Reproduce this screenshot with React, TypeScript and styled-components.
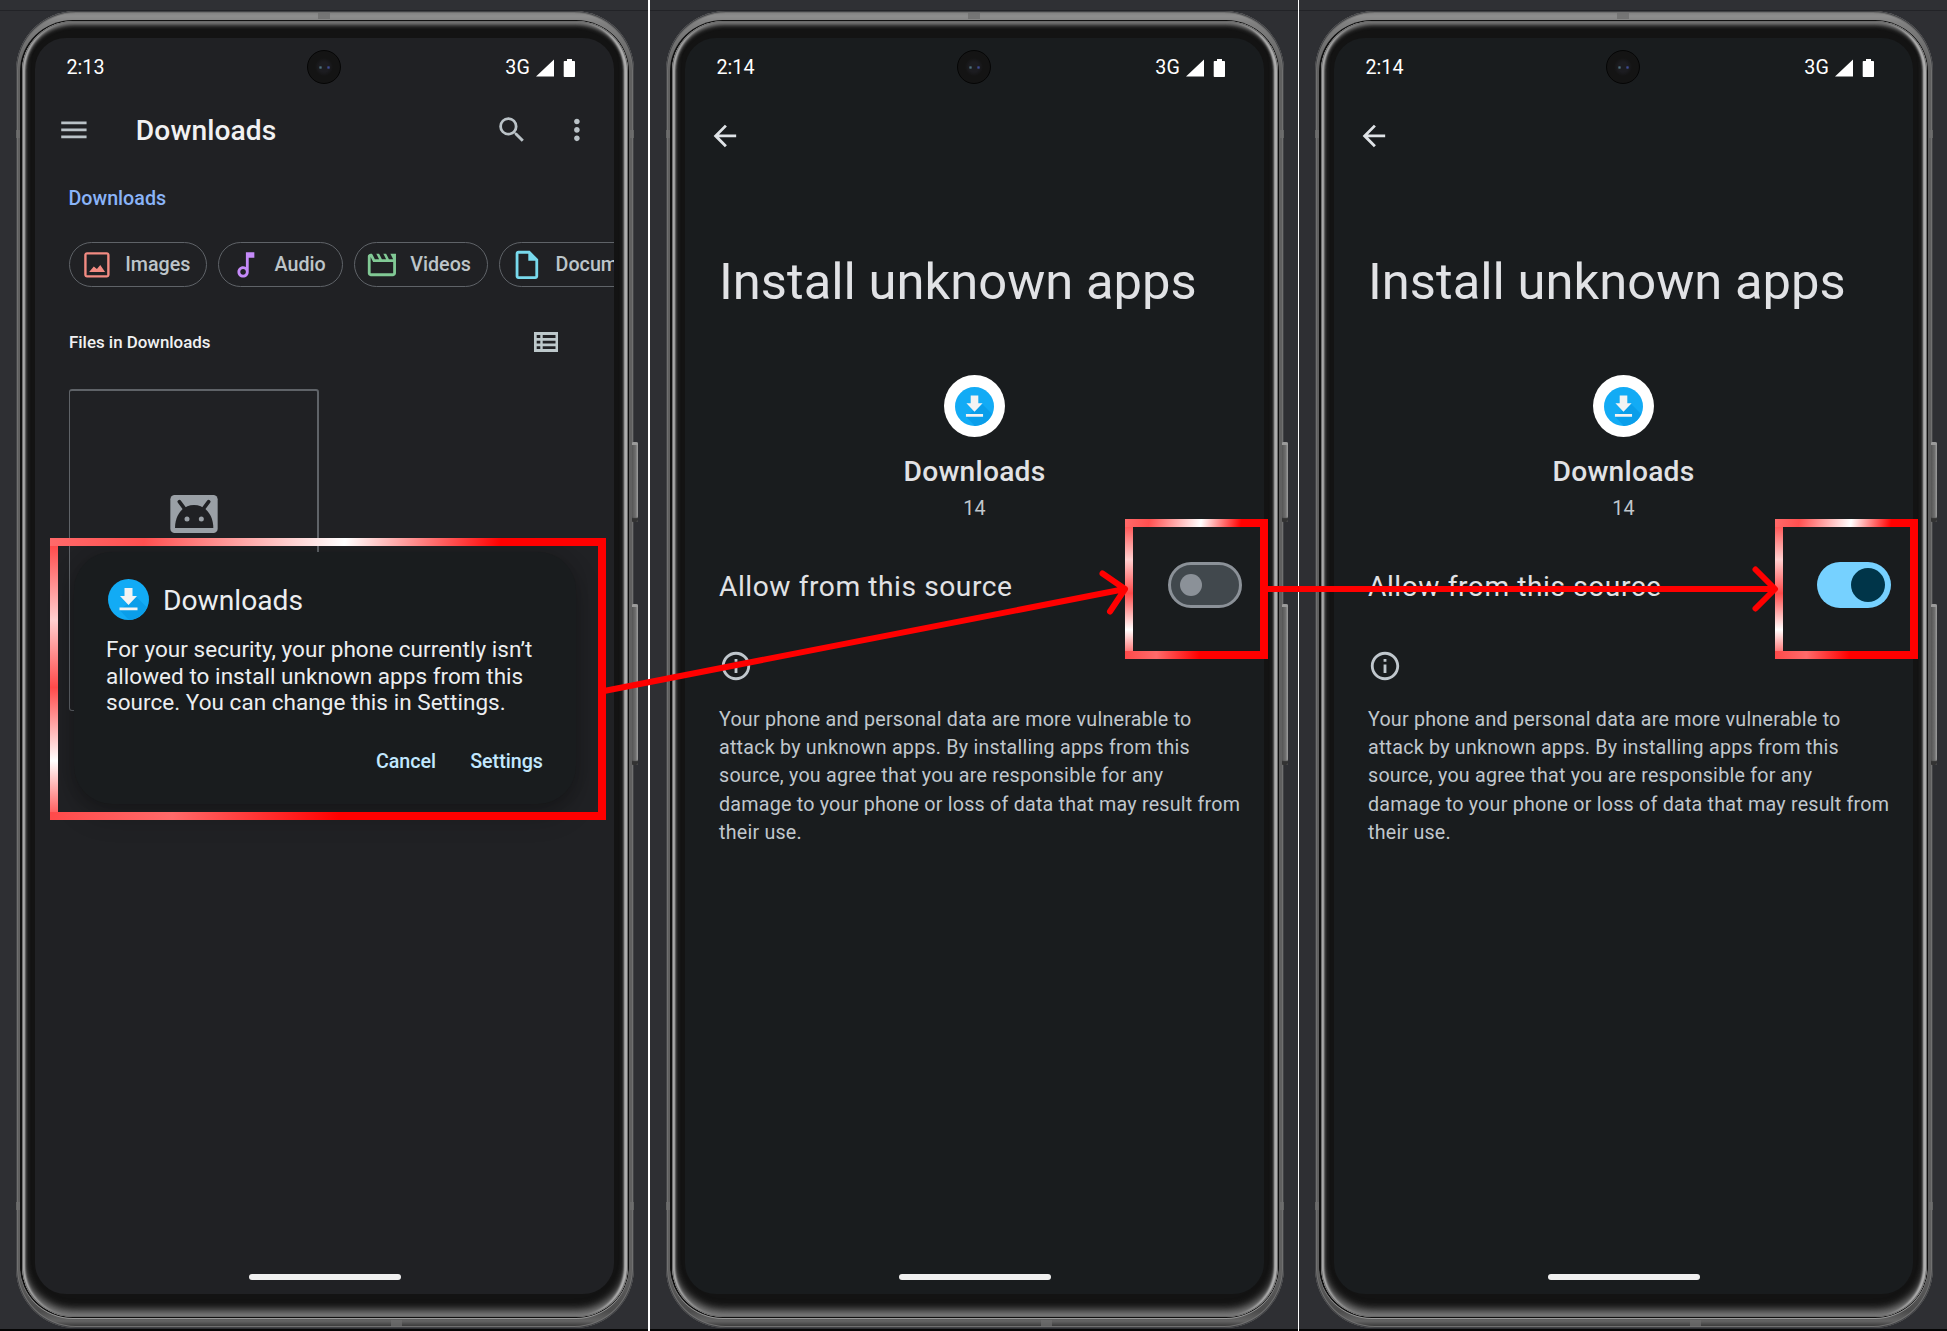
import React from "react";
import styled, { createGlobalStyle } from "styled-components";

const Global = createGlobalStyle`
  * { box-sizing: border-box; }
  html, body { margin: 0; padding: 0; background: #000; }
  body { font-family: Roboto, "Liberation Sans", sans-serif; overflow: hidden; }
  svg { display: block; flex: none; }
`;

const Stage = styled.main`
  position: relative;
  display: grid;
  grid-template-columns: 650px 649px 648px;
  width: 1947px;
  height: 1331px;
`;

const Panel = styled.section<{ $divider?: number }>`
  background: #fff;
  padding-right: ${(p) => p.$divider ?? 0}px;
`;

const Backdrop = styled.div`
  height: 1331px;
  padding: 11px 14px 3px 16px;
  background: linear-gradient(#2f3034 0 10px, #222327 10px 11px, #2e2f33 11px 1329px, #050505 1329px);
`;

const Body = styled.div`
  position: relative;
  height: 1317px;
  padding: 9px 5px 10px 4px;
  border-radius: 60px / 60px;
  background: linear-gradient(#7c7c7c 0, #8e8e8e 5px, #808080 12px, #606060 60px, #606060 1260px, #4c4c4c 1300px, #646464 1310px, #2c2c2c 1317px);
  box-shadow: inset 0 0 0 1px #424346, inset 0 0 0 2px #707070;
`;

const Rim = styled.div`
  height: 100%;
  padding: 1px 1px 1px 2px;
  border-radius: 53px / 51px;
  background: #101010;
  box-shadow: 0 1px 0 #999;
`;

const Bezel = styled.div`
  height: 100%;
  padding: 17px 14px 23px 13px;
  border-radius: 52px / 50px;
  background: #131313;
  box-shadow: inset 0 0 1px 1px #666, inset 4px 0 2px -1px #b4b4b4, inset -5px 0 2px -1px #b4b4b4,
    inset 0 4px 4px #777, inset 0 -5px 8px #858585, inset 0 -8px 8px #3c3c3c, inset 2px 0 4px #777, inset -2px 0 4px #777;
`;

const Screen = styled.div<{ $bg: string }>`
  position: relative;
  display: flex;
  flex-direction: column;
  height: 1256px;
  width: 579px;
  border-radius: 31px;
  overflow: hidden;
  background: ${(p) => p.$bg};
`;

const SideKey = styled.i<{ $top: number; $height: number }>`
  position: absolute;
  left: 616px;
  top: ${(p) => p.$top}px;
  width: 6px;
  height: ${(p) => p.$height}px;
  border-radius: 1px 2px 2px 1px;
  background: linear-gradient(90deg, #555, #6f6f6f 60%, #a0a0a0);
  box-shadow: inset 0 5px 0 -2px #9a9a9a, inset 0 -5px 1px -1px #333;
`;

const Seam = styled.i<{ $x: number; $y: number; $w: number; $h: number }>`
  position: absolute;
  left: ${(p) => p.$x}px;
  top: ${(p) => p.$y}px;
  width: ${(p) => p.$w}px;
  height: ${(p) => p.$h}px;
  background: rgba(110, 110, 110, 0.75);
`;

const Camera = styled.i`
  position: absolute;
  left: 272px;
  top: 12px;
  width: 34px;
  height: 34px;
  border-radius: 50%;
  border: 1px solid #050505;
  background:
    radial-gradient(circle at 12.5px 16.5px, #4d6f7c 0 0.5px, transparent 2px),
    radial-gradient(circle at 20.5px 16.5px, #3d4a94 0 0.5px, transparent 2px),
    radial-gradient(circle at 50% 50%, #1c1c20 0 5px, #141414 9px);
`;

const StatusBar = styled.header`
  display: flex;
  align-items: center;
  height: 58px;
  padding: 1px 38px 0 31.5px;
  font-size: 19.7px;
  color: #fff;
`;
const Clock = styled.span`
  flex: 1;
`;
const Network = styled.span`
  margin-right: 6px;
  letter-spacing: 0.2px;
`;

const HomeBar = styled.i`
  width: 152px;
  height: 6px;
  margin: auto auto 14px 213.5px;
  border-radius: 3px;
  background: #f0f0f0;
`;

const Toolbar = styled.div`
  display: flex;
  align-items: center;
  height: 68px;
  padding: 0 20px 0 22px;
  color: #bac2c7;
`;
const ToolbarTitle = styled.h1`
  flex: 1;
  margin: 1px 0 0 45px;
  font-size: 28.2px;
  font-weight: 500;
  letter-spacing: 0.1px;
  color: #f1f1f2;
`;
const ToolButton = styled.span`
  margin-left: 31px;
`;
const Breadcrumb = styled.div`
  height: 68px;
  line-height: 70px;
  padding-left: 33.5px;
  font-size: 19.7px;
  font-weight: 500;
  color: #8ab4f8;
`;

const Chips = styled.div`
  display: flex;
  gap: 11.3px;
  margin: 10px 0 0 34px;
`;
const Chip = styled.div<{ $w: number }>`
  display: flex;
  flex: none;
  align-items: center;
  gap: 11.4px;
  width: ${(p) => p.$w}px;
  height: 45px;
  padding-left: 10px;
  border: 1.4px solid #5f6368;
  border-radius: 23px;
  line-height: 24px;
  font-size: 19.7px;
  font-weight: 500;
  color: #bdc5c9;
`;
const ChipLabel = styled.span`
  padding-top: 1px;
`;

const SectionHead = styled.div`
  display: flex;
  align-items: center;
  justify-content: space-between;
  height: 93px;
  margin: 8px 0 1px;
  padding: 0 56px 0 34px;
  font-size: 16.9px;
  font-weight: 500;
  color: #f1f1f2;
`;
const FileCard = styled.div`
  width: 250px;
  height: 322px;
  margin-left: 34px;
  padding: 104px 0 0 100px;
  border: solid #5f6368;
  border-width: 2px 2px 1px 1px;
  border-radius: 3px;
`;

const Dialog = styled.div`
  position: absolute;
  left: 39px;
  top: 514px;
  width: 502px;
  height: 252px;
  padding: 27px 33px 0 32px;
  border-radius: 38px;
  background: #191c1e;
  box-shadow: 0 12px 26px rgba(0, 0, 0, 0.25), 0 0 14px rgba(0, 0, 0, 0.14);
`;
const DialogHead = styled.div`
  display: flex;
  align-items: center;
  gap: 14px;
  height: 41px;
  margin-left: 2px;
  line-height: 41px;
  font-size: 28.2px;
  color: #eceef0;
`;
const DialogTitle = styled.span`
  padding-top: 2px;
`;
const DialogText = styled.p`
  margin: 16px 0 0;
  font-size: 22.5px;
  line-height: 26.6px;
  letter-spacing: 0.04px;
  white-space: pre;
  color: #eceef0;
`;
const DialogActions = styled.div`
  display: flex;
  justify-content: flex-end;
  gap: 34px;
  margin-top: 31px;
  line-height: 30px;
  font-size: 19.7px;
  font-weight: 500;
  color: #c2e8ff;
`;

const BackRow = styled.div`
  display: flex;
  align-items: center;
  height: 78px;
  padding: 1px 0 0 22.5px;
  color: #dfe3e7;
`;
const PageTitle = styled.h1`
  margin: 77px 0 62px 34px;
  line-height: 62px;
  font-size: 50.7px;
  font-weight: 400;
  letter-spacing: 0.03px;
  color: #e1e2e5;
  white-space: nowrap;
`;
const AppSummary = styled.div`
  display: flex;
  flex-direction: column;
  align-items: center;
`;
const AppBadge = styled.div`
  display: grid;
  place-items: center;
  width: 61px;
  height: 62px;
  border-radius: 50%;
  background: #fff;
`;
const AppName = styled.div`
  margin-top: 18px;
  line-height: 34px;
  font-size: 28.2px;
  font-weight: 500;
  letter-spacing: 0.25px;
  color: #e1e2e5;
`;
const AppVersion = styled.div`
  margin-top: 8px;
  line-height: 24px;
  font-size: 19.7px;
  letter-spacing: 0.3px;
  color: #c0c7cd;
`;
const SettingRow = styled.div`
  display: flex;
  align-items: center;
  justify-content: space-between;
  height: 60px;
  margin-top: 34px;
  padding: 0 22.5px 0 34px;
  font-size: 28.2px;
  letter-spacing: 0.55px;
  color: #e1e2e5;
`;
const SettingLabel = styled.span`
  padding-top: 2px;
`;
const Track = styled.span<{ $on: boolean }>`
  display: flex;
  align-items: center;
  justify-content: ${(p) => (p.$on ? "flex-end" : "flex-start")};
  width: 74px;
  height: 46px;
  padding: 0 ${(p) => (p.$on ? 6 : 9)}px;
  border: ${(p) => (p.$on ? "0" : "3px solid #8b9198")};
  border-radius: 23px;
  background: ${(p) => (p.$on ? "#76d1ff" : "#41484d")};
`;
const Thumb = styled.i<{ $on: boolean }>`
  width: ${(p) => (p.$on ? 34 : 22)}px;
  height: ${(p) => (p.$on ? 34 : 22)}px;
  border-radius: 50%;
  background: ${(p) => (p.$on ? "#003549" : "#8b9198")};
`;
const InfoIconRow = styled.div`
  margin: 34px 0 0 33.5px;
  color: #c0c7cd;
`;
const InfoText = styled.p`
  margin: 23px 0 0 34px;
  font-size: 19.7px;
  line-height: 28.2px;
  letter-spacing: 0.22px;
  white-space: pre;
  color: #c0c7cd;
`;

const Highlight = styled.div<{ $x: number; $y: number; $w: number; $h: number }>`
  position: absolute;
  left: ${(p) => p.$x}px;
  top: ${(p) => p.$y}px;
  width: ${(p) => p.$w}px;
  height: ${(p) => p.$h}px;
  background:
    linear-gradient(100deg, #ff6a6a 0, #ff5050 17%, #fff 53%, #f00 81%) top / 100% 8px no-repeat,
    linear-gradient(#f00, #f00) right / 8px 100% no-repeat,
    linear-gradient(90deg, #ff4a4a 0, #ff6a6a 22%, #f00 52%) bottom / 100% 8px no-repeat,
    linear-gradient(#ff4c4c 3%, #ffd0d0 29%, #ff4a4a 53%, #fff 79%, #ff4a4a 100%) left / 8px 100% no-repeat;
`;
const Arrows = styled.svg`
  position: absolute;
  left: 0;
  top: 0;
  pointer-events: none;
`;

const ICON = 33.8;
const Glyph = ({ d, color = "currentColor", size = ICON }: { d: string; color?: string; size?: number }) => (
  <svg width={size} height={size} viewBox="0 0 24 24" fill={color}>
    <path fillRule="evenodd" d={d} />
  </svg>
);

const paths = {
  menu: "M3 18h18v-2H3v2zm0-5h18v-2H3v2zm0-7v2h18V6H3z",
  search:
    "M15.5 14h-.79l-.28-.27A6.471 6.471 0 0 0 16 9.5 6.5 6.5 0 1 0 9.5 16c1.61 0 3.09-.59 4.23-1.57l.27.28v.79l5 4.99L20.49 19l-4.99-5zm-6 0C7.01 14 5 11.99 5 9.5S7.01 5 9.5 5 14 7.01 14 9.5 11.99 14 9.5 14z",
  more: "M12 8c1.1 0 2-.9 2-2s-.9-2-2-2-2 .9-2 2 .9 2 2 2zm0 2c-1.1 0-2 .9-2 2s.9 2 2 2 2-.9 2-2-.9-2-2-2zm0 6c-1.1 0-2 .9-2 2s.9 2 2 2 2-.9 2-2-.9-2-2-2z",
  image:
    "M19 3H5c-1.1 0-2 .9-2 2v14c0 1.1.9 2 2 2h14c1.1 0 2-.9 2-2V5c0-1.1-.9-2-2-2zm.3 16.3H4.7V4.7h14.6v14.6zM14.400 12l-2.400 3-2.200-1.800-3.300 3.800h11.300z",
  audio:
    "M12 3l.01 10.55c-.59-.34-1.27-.55-2-.55C7.79 13 6 14.79 6 17s1.79 4 4.01 4S14 19.21 14 17V7h4V3h-6zm-1.99 16c-1.1 0-2-.9-2-2s.9-2 2-2 2 .9 2 2-.9 2-2 2z",
  video:
    "M4 6.47L5.76 10H20v8H4V6.47M22 4h-4l2 4h-3l-2-4h-2l2 4h-3l-2-4H8l2 4H7L5 4H4c-1.1 0-1.99.9-1.99 2L2 18c0 1.1.9 2 2 2h16c1.1 0 2-.9 2-2V4z",
  doc: "M14 2H6c-1.1 0-1.99.9-1.99 2L4 20c0 1.1.89 2 1.99 2H18c1.1 0 2-.9 2-2V8l-6-6zM6 20V4h7v5h5v11H6z",
  back: "M20 11H7.83l5.59-5.59L12 4l-8 8 8 8 1.41-1.41L7.83 13H20v-2z",
  info: "M11 7h2v2h-2zm0 4h2v6h-2zm1-9C6.48 2 2 6.48 2 12s4.48 10 10 10 10-4.48 10-10S17.52 2 12 2zm0 18c-4.41 0-8-3.59-8-8s3.59-8 8-8 8 3.59 8 8-3.59 8-8 8z",
};

const SignalIcon = () => (
  <svg width="40" height="18" viewBox="0 0 40 18" fill="#fff">
    <path d="M0 17.5 18 .5v17z" />
    <path d="M28.5 2H31V0h5v2h2.200q.8 0 .8.8V17.200q0 .8-.8.8H28.500q-.8 0-.8-.8V2.800q0-.8.8-.8z" />
  </svg>
);

const ListIcon = () => (
  <svg width="24" height="20" viewBox="0 0 24 20" fill="#bdc8cb">
    <path
      fillRule="evenodd"
      d="M0 0h24v20H0zM2.700 3h3.600v3H2.700zM8.700 3h12.800v3H8.700zM2.700 8.700h3.600v2.800H2.700zM8.700 8.700h12.800v2.800H8.700zM2.700 14.300h3.600v2.800H2.700zM8.700 14.300h12.800v2.800H8.700z"
    />
  </svg>
);

const ApkIcon = () => (
  <svg width="48" height="38" viewBox="0 0 142 114">
    <rect width="142" height="114" rx="13" fill="#9aa0a6" />
    <path d="M14 99c0-40 24-69 57-69s58 29 58 69z" fill="#202124" />
    <path d="M27 20l15 20M115 20l-15 20" stroke="#202124" strokeWidth="11" strokeLinecap="round" />
    <circle cx="50" cy="72" r="7.500" fill="#9aa0a6" />
    <circle cx="93" cy="72" r="7.500" fill="#9aa0a6" />
  </svg>
);

const DownloadIcon = ({ size }: { size: number }) => (
  <svg width={size} height={size} viewBox="0 0 41 41">
    <circle cx="20.5" cy="20.500" r="20.500" fill="#12abf5" />
    <path d="M28.500 18l10.500 10.500A20.500 20.500 0 0 1 21 41L11.500 31z" fill="#0a9eea" />
    <path d="M16.500 9h8v8h4.500l-8.500 9-8.500-9h4.500zM11.500 28.500h18v2.800h-18z" fill="#f3f3f3" />
  </svg>
);

function Phone({ bg, time, children }: { bg: string; time: string; children: React.ReactNode }) {
  return (
    <Backdrop>
      <Body>
        <Rim>
          <Bezel>
            <Screen $bg={bg}>
              <StatusBar>
                <Clock>{time}</Clock>
                <Network>3G</Network>
                <SignalIcon />
              </StatusBar>
              {children}
              <HomeBar />
              <Camera />
            </Screen>
          </Bezel>
        </Rim>
        <Seam $x={302} $y={2} $w={12} $h={6} />
        <Seam $x={375} $y={1309} $w={11} $h={6} />
        <Seam $x={0} $y={119} $w={4} $h={8} />
        <Seam $x={614} $y={119} $w={4} $h={8} />
        <Seam $x={0} $y={1191} $w={4} $h={8} />
        <Seam $x={614} $y={1191} $w={4} $h={8} />
        <SideKey $top={431} $height={80} />
        <SideKey $top={593} $height={161} />
      </Body>
    </Backdrop>
  );
}

function FilesScreen() {
  return (
    <Phone bg="#202124" time="2:13">
      <Toolbar>
        <Glyph d={paths.menu} />
        <ToolbarTitle>Downloads</ToolbarTitle>
        <Glyph d={paths.search} />
        <ToolButton>
          <Glyph d={paths.more} />
        </ToolButton>
      </Toolbar>
      <Breadcrumb>Downloads</Breadcrumb>
      <Chips>
        <Chip $w={138}>
          <Glyph d={paths.image} color="#f28b82" />
          <ChipLabel>Images</ChipLabel>
        </Chip>
        <Chip $w={124.5}>
          <Glyph d={paths.audio} color="#c58af9" />
          <ChipLabel>Audio</ChipLabel>
        </Chip>
        <Chip $w={134}>
          <Glyph d={paths.video} color="#81c995" />
          <ChipLabel>Videos</ChipLabel>
        </Chip>
        <Chip $w={180}>
          <Glyph d={paths.doc} color="#78d9ec" />
          <ChipLabel>Documents</ChipLabel>
        </Chip>
      </Chips>
      <SectionHead>
        Files in Downloads
        <ListIcon />
      </SectionHead>
      <FileCard>
        <ApkIcon />
      </FileCard>
      <Dialog>
        <DialogHead>
          <DownloadIcon size={41} />
          <DialogTitle>Downloads</DialogTitle>
        </DialogHead>
        <DialogText>
          {"For your security, your phone currently isn’t\nallowed to install unknown apps from this\nsource. You can change this in Settings."}
        </DialogText>
        <DialogActions>
          <span>Cancel</span>
          <span>Settings</span>
        </DialogActions>
      </Dialog>
    </Phone>
  );
}

function SourceScreen({ allowed }: { allowed: boolean }) {
  return (
    <Phone bg="#191c1e" time="2:14">
      <BackRow>
        <Glyph d={paths.back} />
      </BackRow>
      <PageTitle>Install unknown apps</PageTitle>
      <AppSummary>
        <AppBadge>
          <DownloadIcon size={39} />
        </AppBadge>
        <AppName>Downloads</AppName>
        <AppVersion>14</AppVersion>
      </AppSummary>
      <SettingRow>
        <SettingLabel>Allow from this source</SettingLabel>
        <Track $on={allowed}>
          <Thumb $on={allowed} />
        </Track>
      </SettingRow>
      <InfoIconRow>
        <Glyph d={paths.info} size={34} />
      </InfoIconRow>
      <InfoText>
        {"Your phone and personal data are more vulnerable to\nattack by unknown apps. By installing apps from this\nsource, you agree that you are responsible for any\ndamage to your phone or loss of data that may result from\ntheir use."}
      </InfoText>
    </Phone>
  );
}

export default function App() {
  return (
    <>
      <Global />
      <Stage>
        <Panel $divider={2}>
          <FilesScreen />
        </Panel>
        <Panel $divider={1}>
          <SourceScreen allowed={false} />
        </Panel>
        <Panel>
          <SourceScreen allowed />
        </Panel>
        <Highlight $x={50} $y={538} $w={556} $h={282} />
        <Highlight $x={1125} $y={519} $w={143} $h={140} />
        <Highlight $x={1775} $y={519} $w={143} $h={140} />
        <Arrows width="1947" height="1331" fill="none" stroke="#f00" strokeWidth="6" strokeLinecap="round" strokeLinejoin="round">
          <path d="M604 691 1125 589M1102.500 573.500 1125 589 1110 611.500" />
          <path d="M1265 589H1774M1755.500 569.500 1775 589 1755.500 608.500" />
        </Arrows>
      </Stage>
    </>
  );
}
